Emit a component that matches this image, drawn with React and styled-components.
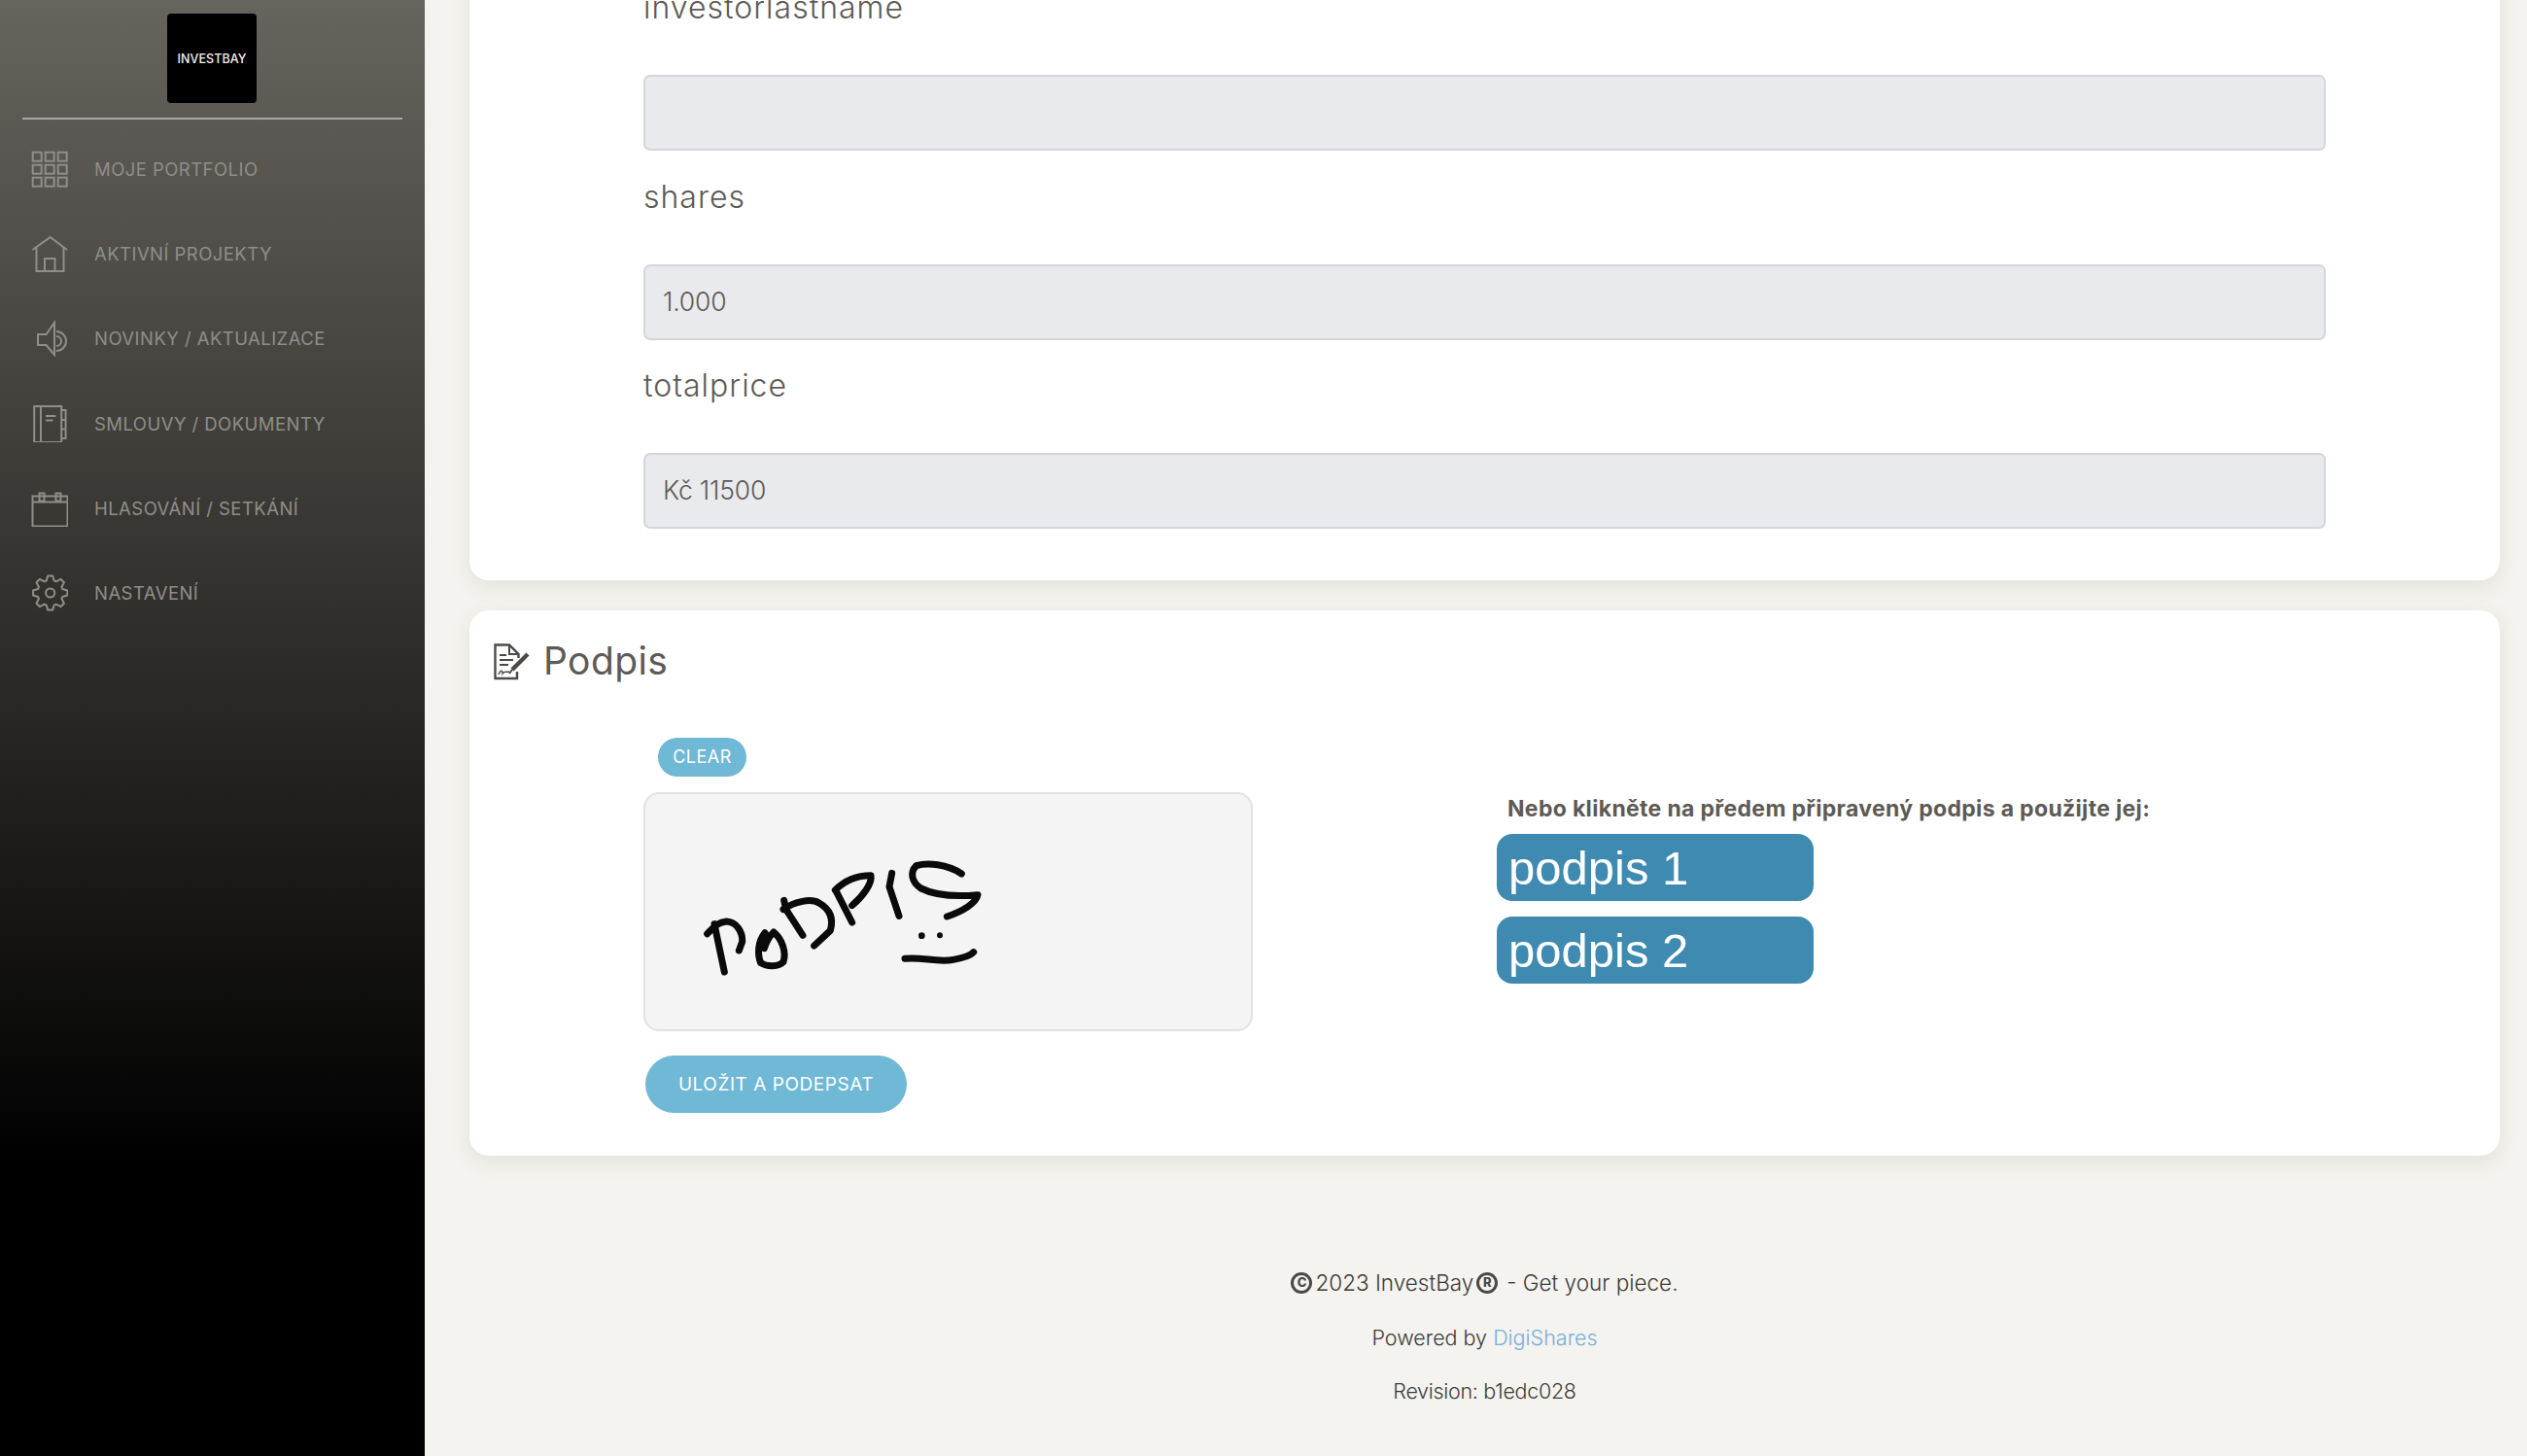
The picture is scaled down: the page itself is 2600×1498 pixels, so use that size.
import React from "react";
import styled, { createGlobalStyle } from "styled-components";

const FONT = `Inter, "Noto Sans", "Liberation Sans", sans-serif`;

const Global = createGlobalStyle`
  html, body { margin: 0; padding: 0; height: 1498px; overflow: hidden; background: #f4f3ef; }
  * { box-sizing: border-box; }
  body { font-family: ${FONT}; }
`;

const Page = styled.div`
  display: flex;
  height: 1498px;
  overflow: hidden;
`;

const Sidebar = styled.aside`
  flex: 0 0 437px;
  height: 1498px;
  background: linear-gradient(180deg, #67645d 0%, #000 80%);
  padding: 14px 23px 0;
`;

const LogoWrap = styled.div`
  display: flex;
  justify-content: center;
  padding-bottom: 15px;
  border-bottom: 2px solid #a9a7a2;
  padding-right: 1px;
`;

const Logo = styled.div`
  width: 92px;
  height: 92px;
  background: #000;
  border-radius: 4px;
  color: #f2f2f2;
  font-size: 12.5px;
  font-weight: 500;
  letter-spacing: 0.1px;
  display: flex;
  align-items: center;
  justify-content: center;
`;

const Nav = styled.nav`
  display: flex;
  flex-direction: column;
  padding-top: 7px;
`;

const NavItem = styled.a`
  display: flex;
  align-items: center;
  height: 87.3px;
  padding-left: 9px;
  color: #908e89;
  font-size: 18.5px;
  font-weight: 400;
  letter-spacing: 0.45px;
  white-space: nowrap;
`;

const NavIcon = styled.svg`
  flex: 0 0 38px;
  width: 38px;
  height: 38px;
  margin-right: 27px;
  fill: none;
  stroke: #908e89;
  stroke-width: 2;
`;

const Main = styled.main`
  flex: 1;
  min-width: 0;
  padding: 0 28px 0 46px;
  display: flex;
  flex-direction: column;
`;

const Card = styled.section`
  background: #fff;
  border-radius: 20px;
  box-shadow: 0 6px 20px rgba(120, 118, 105, 0.14);
`;

const FormCard = styled(Card)`
  margin-top: -60px;
  padding: 44px 179px 29px 179px;
`;

const Field = styled.div`
  display: flex;
  flex-direction: column;
  margin-bottom: 23.67px;
`;

const Label = styled.label`
  height: 48px;
  line-height: 48px;
  margin-bottom: 45px;
  font-size: 32px;
  font-weight: 300;
  letter-spacing: 1px;
  color: #5e5a55;
`;

const Input = styled.div`
  height: 78px;
  background: #e9eaee;
  border: 2px solid #d5d6dc;
  border-radius: 7px;
  display: flex;
  align-items: center;
  padding: 0 0 2px 18px;
  font-size: 26.5px;
  font-weight: 300;
  color: #5e5a55;
  letter-spacing: -0.2px;
`;

const SignCard = styled(Card)`
  margin-top: 31px;
  height: 561px;
  padding: 0 0 0 22px;
`;

const SignHeader = styled.header`
  display: flex;
  align-items: center;
  height: 104px;
`;

const HeaderIcon = styled.svg`
  width: 42px;
  height: 42px;
  margin-right: 12px;
  fill: none;
  stroke: #4d4a46;
  stroke-width: 2;
`;

const Title = styled.h2`
  margin: 0;
  font-size: 39px;
  font-weight: 400;
  letter-spacing: 0.4px;
  color: #5e5a55;
`;

const SignBody = styled.div`
  display: grid;
  grid-template-columns: 878px 1fr;
  padding-left: 157px;
  padding-top: 27px;
`;

const SignColumn = styled.div`
  display: flex;
  flex-direction: column;
  align-items: flex-start;
`;

const ClearButton = styled.button`
  margin: 0 0 16px 15px;
  width: 91px;
  height: 40px;
  border: none;
  border-radius: 20px;
  background: #6fb8d6;
  color: #fff;
  font-family: ${FONT};
  font-size: 18px;
  font-weight: 400;
  letter-spacing: 0.5px;
  padding: 0;
`;

const Pad = styled.div`
  width: 627px;
  height: 246px;
  background: #f4f4f4;
  border: 2px solid #e2e2e2;
  border-radius: 16px;
  padding: 52px 0 0 47px;
`;

const Signature = styled.svg`
  display: block;
  width: 320px;
  height: 150px;
  fill: none;
  stroke: #0a0a0a;
  stroke-width: 21;
  stroke-linecap: round;
  stroke-linejoin: round;
`;

const SaveButton = styled.button`
  margin: 25px 0 0 2px;
  width: 269px;
  height: 59px;
  border: none;
  border-radius: 30px;
  background: #6fb8d6;
  color: #fff;
  font-family: ${FONT};
  font-size: 19px;
  font-weight: 400;
  letter-spacing: 0.55px;
  padding: 0;
`;

const Hint = styled.p`
  margin: 53px 0 6px 11px;
  line-height: 40px;
  font-size: 23px;
  font-weight: 700;
  letter-spacing: 0.33px;
  color: #5e5a55;
  white-space: nowrap;
`;

const PresetButton = styled.button`
  width: 326px;
  height: 69px;
  margin-bottom: 16px;
  border: none;
  border-radius: 16px;
  background: #3e8ab0;
  color: #fff;
  font-family: "Liberation Sans", Arial, sans-serif;
  font-size: 49px;
  text-align: left;
  padding: 2px 0 0 12px;
`;

const Footer = styled.footer`
  display: flex;
  flex-direction: column;
  align-items: center;
  padding-top: 108px;
  color: #3d3b38;
  font-weight: 300;
`;

const FooterLine = styled.div`
  height: ${(p) => p.$h}px;
  line-height: ${(p) => p.$h}px;
  font-size: ${(p) => p.$size}px;
  letter-spacing: ${(p) => p.$ls}px;
  display: flex;
  align-items: center;
  white-space: pre;
`;

const Badge = styled.span`
  display: inline-flex;
  align-items: center;
  justify-content: center;
  width: 22px;
  height: 22px;
  border: 3px solid #4a4845;
  border-radius: 50%;
  font-size: 13px;
  font-weight: 800;
  line-height: 1;
  letter-spacing: 0;
  color: #4a4845;
  margin: 0 3px 0 ${(p) => p.$left}px;
`;

const Tagline = styled.span`
  margin-left: 6px;
`;

const FooterLink = styled.a`
  color: #7aaed8;
`;

const gearPath = (() => {
  const cx = 19.7, cy = 19;
  const pts = [];
  for (let i = 0; i < 8; i++) {
    const a = (i * Math.PI * 2) / 8 - Math.PI / 2;
    const step = Math.PI / 8;
    const spots = [
      [13.2, a - step * 0.78],
      [17.8, a - step * 0.36],
      [17.8, a + step * 0.36],
      [13.2, a + step * 0.78],
    ];
    spots.forEach(([r, t]) => pts.push(`${(cx + r * Math.cos(t)).toFixed(2)} ${(cy + r * Math.sin(t)).toFixed(2)}`));
  }
  return "M" + pts.join(" L") + " Z";
})();

const GridIcon = () => (
  <NavIcon viewBox="0 0 38 38">
    {[1.7, 14.7, 27.7].map((y) =>
      [1.7, 14.7, 27.7].map((x) => <rect key={`${x}-${y}`} x={x} y={y} width="9" height="9" />)
    )}
  </NavIcon>
);
const HouseIcon = () => (
  <NavIcon viewBox="0 0 38 38">
    <path d="M1.5 15 L19.7 2 L37 15" />
    <path d="M5.5 12 V37 H33.5 V12" />
    <path d="M14 37 V24 H24.5 V37" />
  </NavIcon>
);
const SpeakerIcon = () => (
  <NavIcon viewBox="0 0 38 38">
    <path d="M7 15 H15.5 L24 3 V36 L15.5 26 H7 Z" />
    <path d="M26 12 A10 10 0 0 1 26 32" />
    <path d="M26 17 A5 5 0 0 1 26 27" />
  </NavIcon>
);
const NotebookIcon = () => (
  <NavIcon viewBox="0 0 38 38">
    <rect x="3.2" y="1" width="28" height="37" />
    <path d="M10 1 V38" />
    <path d="M15 11 H25.5 M15 15.5 H22.5" />
    <path d="M31.2 5 H35.6 V34 H31.2 M31.2 15 H35.6 M31.2 24.5 H35.6" />
  </NavIcon>
);
const CalendarIcon = () => (
  <NavIcon viewBox="0 0 38 38">
    <rect x="1.5" y="6.5" width="36" height="31" />
    <path d="M1.5 12.5 H37.5" />
    <rect x="8.5" y="3.5" width="5" height="8" />
    <rect x="25.5" y="3.5" width="5" height="8" />
  </NavIcon>
);
const GearIcon = () => (
  <NavIcon viewBox="0 0 38 38" strokeLinejoin="round">
    <path d={gearPath} />
    <circle cx="19.7" cy="19" r="4.6" />
  </NavIcon>
);

const NAV = [
  [GridIcon, "MOJE PORTFOLIO"],
  [HouseIcon, "AKTIVNÍ PROJEKTY"],
  [SpeakerIcon, "NOVINKY / AKTUALIZACE"],
  [NotebookIcon, "SMLOUVY / DOKUMENTY"],
  [CalendarIcon, "HLASOVÁNÍ / SETKÁNÍ"],
  [GearIcon, "NASTAVENÍ"],
];

const FIELDS = [
  ["investorlastname", ""],
  ["shares", "1.000"],
  ["totalprice", "Kč 11500"],
];

export default function App() {
  return (
    <Page>
      <Global />
      <Sidebar>
        <LogoWrap>
          <Logo>INVESTBAY</Logo>
        </LogoWrap>
        <Nav>
          {NAV.map(([Icon, text]) => (
            <NavItem key={text}>
              <Icon />
              {text}
            </NavItem>
          ))}
        </Nav>
      </Sidebar>
      <Main>
        <FormCard>
          {FIELDS.map(([label, value]) => (
            <Field key={label}>
              <Label>{label}</Label>
              <Input>{value}</Input>
            </Field>
          ))}
        </FormCard>
        <SignCard>
          <SignHeader>
            <HeaderIcon viewBox="0 0 42 42">
              <path d="M27 32 V39 H4.5 V4.5 H19 L28.5 14 V18" strokeWidth="2.4" />
              <path d="M19 4.5 V14 H28.5" strokeWidth="2" />
              <path d="M9 15 H16 M9 20 H23 M9 25 H18" />
              <path d="M8 35 C10 30 12 30 12 34 C14 31 16 33 19 32" strokeWidth="1.4" />
              <path d="M38 14 L22 30" strokeWidth="4.5" />
              <path d="M22 30 L19 34" strokeWidth="2" />
            </HeaderIcon>
            <Title>Podpis</Title>
          </SignHeader>
          <SignBody>
            <SignColumn>
              <ClearButton>CLEAR</ClearButton>
              <Pad>
                <Signature viewBox="0 0 960 450">
                  <path d="M50 275 C70 255 80 240 110 237 C140 238 160 270 158 300 L148 327" />
                  <path d="M72 245 L103 393" />
                  <path d="M228 272 C205 300 205 340 215 365 C235 378 270 378 285 362 C295 330 280 290 255 270 C240 285 232 300 226 320" />
                  <path d="M287 172 L293 200 L345 280" />
                  <path d="M285 200 C320 175 370 165 395 180 C430 200 440 230 430 265 L380 312" />
                  <path d="M447 142 L497 240" />
                  <path d="M445 140 C480 105 520 95 555 95 C560 120 530 160 497 188" />
                  <path d="M620 88 L612 130 L642 220" />
                  <path d="M835 90 C790 60 730 55 695 65 C675 85 680 115 710 135 C760 160 830 160 885 155 C880 180 840 205 790 222" />
                  <circle cx="712" cy="281" r="10" fill="#0a0a0a" stroke="none" />
                  <circle cx="768" cy="280" r="9" fill="#0a0a0a" stroke="none" />
                  <path d="M660 352 C710 345 760 365 810 355 C840 350 860 345 872 332" />
                </Signature>
              </Pad>
              <SaveButton>ULOŽIT A PODEPSAT</SaveButton>
            </SignColumn>
            <SignColumn>
              <Hint>Nebo klikněte na předem připravený podpis a použijte jej:</Hint>
              <PresetButton>podpis 1</PresetButton>
              <PresetButton>podpis 2</PresetButton>
            </SignColumn>
          </SignBody>
        </SignCard>
        <Footer>
          <FooterLine $h={46} $size={22.5} $ls={0}>
            <Badge $left={0}>C</Badge>2023 InvestBay<Badge $left={3}>R</Badge>
            <Tagline>- Get your piece.</Tagline>
          </FooterLine>
          <FooterLine $h={67} $size={21.5} $ls={0}>
            Powered by <FooterLink>DigiShares</FooterLink>
          </FooterLine>
          <FooterLine $h={42} $size={21.5} $ls={-0.3}>Revision: b1edc028</FooterLine>
        </Footer>
      </Main>
    </Page>
  );
}
